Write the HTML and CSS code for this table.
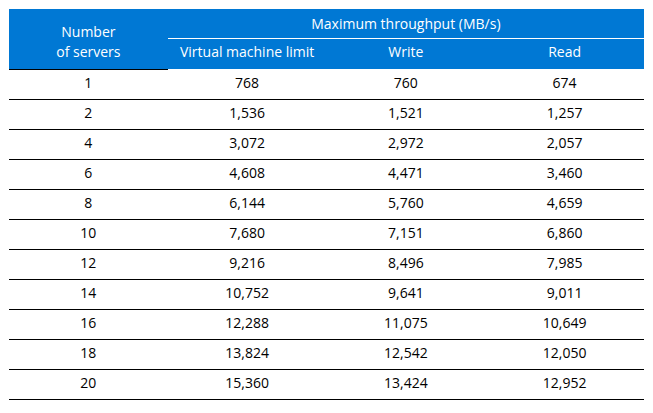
FILE: index.html
```html
<!DOCTYPE html>
<html>
<head>
<meta charset="utf-8">
<link rel="stylesheet" href="styles.css">
</head>
<body>
<table class="tp">
  <colgroup><col><col><col><col></colgroup>
  <thead>
    <tr>
      <th class="num" rowspan="2">Number<br>of servers</th>
      <th class="group" colspan="3">Maximum throughput (MB/s)</th>
    </tr>
    <tr>
      <th class="sub">Virtual machine limit</th>
      <th class="sub">Write</th>
      <th class="sub">Read</th>
    </tr>
  </thead>
  <tbody>
    <tr><td>1</td><td>768</td><td>760</td><td>674</td></tr>
    <tr><td>2</td><td>1,536</td><td>1,521</td><td>1,257</td></tr>
    <tr><td>4</td><td>3,072</td><td>2,972</td><td>2,057</td></tr>
    <tr><td>6</td><td>4,608</td><td>4,471</td><td>3,460</td></tr>
    <tr><td>8</td><td>6,144</td><td>5,760</td><td>4,659</td></tr>
    <tr><td>10</td><td>7,680</td><td>7,151</td><td>6,860</td></tr>
    <tr><td>12</td><td>9,216</td><td>8,496</td><td>7,985</td></tr>
    <tr><td>14</td><td>10,752</td><td>9,641</td><td>9,011</td></tr>
    <tr><td>16</td><td>12,288</td><td>11,075</td><td>10,649</td></tr>
    <tr><td>18</td><td>13,824</td><td>12,542</td><td>12,050</td></tr>
    <tr><td>20</td><td>15,360</td><td>13,424</td><td>12,952</td></tr>
  </tbody>
</table>
</body>
</html>
```
FILE: styles.css
```css
html, body {
  margin: 0;
  padding: 0;
  background: #ffffff;
}
body {
  padding: 9px;
  font-family: "Open Sans", "Noto Sans", sans-serif;
  font-size: 14px;
  color: #000000;
}
.tp {
  width: 635px;
  table-layout: fixed;
  border-collapse: separate;
  border-spacing: 0;
}
.tp col {
  width: 25%;
}
.tp th {
  background: #0078d4;
  color: #ffffff;
  font-weight: normal;
  text-align: center;
  vertical-align: middle;
  padding: 0;
  line-height: 19px;
}
.tp th.num {
  height: 54px;
  padding-top: 6px;
  line-height: 20px;
  border-bottom: 1px solid #000000;
}
.tp th.group {
  height: 28px;
  padding-bottom: 1px;
  border-bottom: 1px solid #ffffff;
}
.tp th.sub {
  height: 25px;
  padding-bottom: 5px;
  border-bottom: 1px solid #ffffff;
}
.tp td {
  height: 25px;
  padding: 0 0 4px 0;
  text-align: center;
  vertical-align: middle;
  border-bottom: 1px solid #000000;
  line-height: 19px;
}
```
